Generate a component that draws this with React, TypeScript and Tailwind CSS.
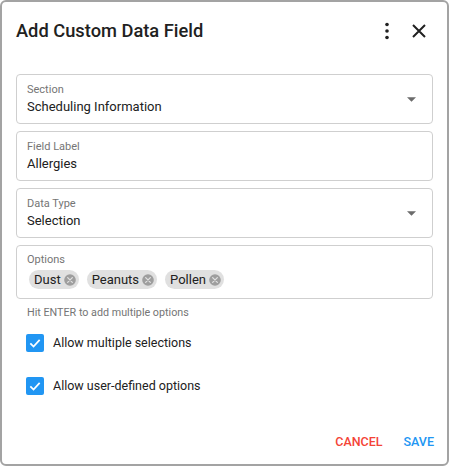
import React from 'react'

const FONT = { fontFamily: 'Roboto, "Liberation Sans", sans-serif' }

function Caret() {
  return (
    <svg width="9" height="5" viewBox="0 0 10 5" className="shrink-0">
      <path d="M0 0 L10 0 L5 5 Z" fill="#6b6b6b" />
    </svg>
  )
}

function Field({ label, value, select }: { label: string; value: string; select?: boolean }) {
  return (
    <div className="flex items-center h-[50px] border border-[#cfcfcf] rounded-[4px] pl-[10px] pr-[16px]">
      <div className="flex-1 flex flex-col">
        <span className="text-[11px] leading-[14px] text-[#757575]">{label}</span>
        <span className="text-[13px] leading-[19px] text-[#212121]">{value}</span>
      </div>
      {select && <Caret />}
    </div>
  )
}

function Chip({ text }: { text: string }) {
  return (
    <div className="flex items-center h-[19px] rounded-full bg-[#e0e0e0] pl-[5px] pr-[2px] gap-[2px]">
      <span className="text-[13px] leading-[19px] text-[#212121]">{text}</span>
      <svg width="14" height="14" viewBox="0 0 24 24">
        <circle cx="12" cy="12" r="10" fill="#9e9e9e" />
        <path d="M8 8 L16 16 M16 8 L8 16" stroke="#e0e0e0" strokeWidth="2.2" strokeLinecap="round" />
      </svg>
    </div>
  )
}

function Check({ label }: { label: string }) {
  return (
    <div className="flex items-center gap-[9px] pl-[24px] h-[18px]">
      <div className="w-[18px] h-[18px] rounded-[2px] bg-[#2196f3] flex items-center justify-center">
        <svg width="14" height="14" viewBox="0 0 24 24">
          <path d="M4 12.5 L9.5 18 L20 6.5" stroke="white" strokeWidth="3" fill="none" />
        </svg>
      </div>
      <span className="text-[12.5px] text-[#212121]">{label}</span>
    </div>
  )
}

export default function App() {
  return (
    <div style={FONT} className="w-[449px] h-[466px] bg-white">
      <div className="w-full h-full border-2 border-[#a3a3a3] rounded-[6px] flex flex-col">
        {/* Title */}
        <div className="flex items-center h-[58px] pl-[14px] pr-[16px]">
          <span className="flex-1 text-[18.3px] font-medium text-[#212121]">Add Custom Data Field</span>
          <svg width="24" height="24" viewBox="0 0 24 24" className="mr-[8px]">
            <circle cx="12" cy="5.5" r="1.8" fill="#212121" />
            <circle cx="12" cy="12" r="1.8" fill="#212121" />
            <circle cx="12" cy="18.5" r="1.8" fill="#212121" />
          </svg>
          <svg width="24" height="24" viewBox="0 0 24 24">
            <path d="M6 6 L18 18 M18 6 L6 18" stroke="#212121" strokeWidth="2" />
          </svg>
        </div>

        {/* Fields */}
        <div className="flex flex-col gap-[7px] px-[14px] pt-[14px]">
          <Field label="Section" value="Scheduling Information" select />
          <Field label="Field Label" value="Allergies" />
          <Field label="Data Type" value="Selection" select />
          <div className="flex flex-col h-[54px] border border-[#cfcfcf] rounded-[4px] pl-[10px] pt-[7px]">
            <span className="text-[11px] leading-[14px] text-[#757575]">Options</span>
            <div className="flex items-center gap-[8px] mt-[3px] ml-[2px]">
              <Chip text="Dust" />
              <Chip text="Peanuts" />
              <Chip text="Pollen" />
            </div>
          </div>
        </div>
        <div className="pl-[25px] pt-[6px] text-[10.75px] text-[#757575]">Hit ENTER to add multiple options</div>

        {/* Checkboxes */}
        <div className="flex flex-col gap-[25px] mt-[13px]">
          <Check label="Allow multiple selections" />
          <Check label="Allow user-defined options" />
        </div>

        <div className="flex-1" />

        {/* Actions */}
        <div className="flex justify-end items-center gap-[21px] pr-[13px] pb-[12px]">
          <span className="text-[12.5px] font-medium text-[#f44336]">CANCEL</span>
          <span className="text-[12.5px] font-medium text-[#2196f3]">SAVE</span>
        </div>
      </div>
    </div>
  )
}
